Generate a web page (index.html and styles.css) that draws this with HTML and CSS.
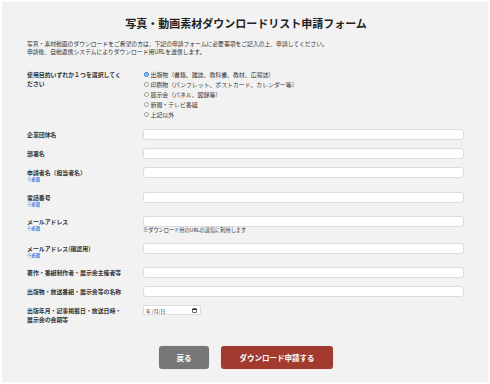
FILE: index.html
```html
<!DOCTYPE html>
<html lang="ja">
<head>
    <meta charset="UTF-8">
    <meta name="viewport" content="width=device-width, initial-scale=1.0">
    <title>写真・動画素材ダウンロードリスト申請フォーム</title>
    <link rel="stylesheet" href="styles.css">
</head>
<body>
    <div class="page">
        <h1 class="title">写真・動画素材ダウンロードリスト申請フォーム</h1>
        <p class="intro">
            写真・素材動画のダウンロードをご希望の方は、下記の申請フォームに必要事項をご記入の上、申請してください。<br>
            申請後、自動返信システムによりダウンロード用URLを送信します。
        </p>

        <form class="form" onsubmit="return false;">
            <div class="row row-radio">
                <div class="label">使用目的いずれか１つを選択してください</div>
                <div class="radios">
                    <label class="radio"><input type="radio" name="purpose" checked>出版物（書籍、雑誌、教科書、教材、広報誌）</label>
                    <label class="radio"><input type="radio" name="purpose">印刷物（パンフレット、ポストカード、カレンダー等）</label>
                    <label class="radio"><input type="radio" name="purpose">展示会（パネル、図録等）</label>
                    <label class="radio"><input type="radio" name="purpose">新聞・テレビ番組</label>
                    <label class="radio"><input type="radio" name="purpose">上記以外</label>
                </div>
            </div>

            <div class="row">
                <div class="label">企業団体名</div>
                <div class="field"><input type="text" class="text-input"></div>
            </div>

            <div class="row">
                <div class="label">部署名</div>
                <div class="field"><input type="text" class="text-input"></div>
            </div>

            <div class="row">
                <div class="label required">申請者名（担当者名）<span class="must">※必須</span></div>
                <div class="field"><input type="text" class="text-input"></div>
            </div>

            <div class="row">
                <div class="label required">電話番号<span class="must">※必須</span></div>
                <div class="field"><input type="tel" class="text-input"></div>
            </div>

            <div class="row row-mail">
                <div class="label required">メールアドレス<span class="must">※必須</span></div>
                <div class="field">
                    <input type="email" class="text-input">
                    <div class="note">※ダウンロード用のURLの送信に利用します</div>
                </div>
            </div>

            <div class="row">
                <div class="label required">メールアドレス(確認用)<span class="must">※必須</span></div>
                <div class="field"><input type="email" class="text-input"></div>
            </div>

            <div class="row">
                <div class="label">著作・番組制作者・展示会主催者等</div>
                <div class="field"><input type="text" class="text-input"></div>
            </div>

            <div class="row">
                <div class="label">出版物・放送番組・展示会等の名称</div>
                <div class="field"><input type="text" class="text-input"></div>
            </div>

            <div class="row">
                <div class="label">出版年月・記事掲載日・放送日時・展示会の会期等</div>
                <div class="field">
                    <div class="date-field">
                        <span>年 /月/日</span>
                        <svg class="cal-icon" viewBox="0 0 10 10" width="5" height="5">
                            <rect x="1" y="1.5" width="8" height="7.5" rx="1" fill="none" stroke="#222" stroke-width="1.4"/>
                            <rect x="1" y="1.5" width="8" height="2.5" fill="#222"/>
                        </svg>
                    </div>
                </div>
            </div>

            <div class="buttons">
                <button type="button" class="btn btn-back">戻る</button>
                <button type="submit" class="btn btn-submit">ダウンロード申請する</button>
            </div>
        </form>
    </div>
</body>
</html>
```

FILE: styles.css
```css
* {
    box-sizing: border-box;
    font-family: 'Noto Sans CJK JP', 'Noto Sans', sans-serif;
}
body {
    margin: 0;
    background-color: #ffffff;
    color: #333;
}
.page {
    margin: 2px;
    height: 380px;
    background-color: #f2f2f2;
    padding: 15px 23px 0 25px;
}
.title {
    margin: 0;
    font-size: 11px;
    line-height: 12px;
    font-weight: 700;
    text-align: center;
    color: #222;
}
.intro {
    margin: 11px 0 0;
    font-size: 5.8px;
    line-height: 8.2px;
    color: #333;
}
.form {
    margin-top: 12.6px;
    display: flex;
    flex-direction: column;
    gap: 8px;
}
.row {
    display: grid;
    grid-template-columns: 116px 1fr;
    align-items: start;
}
.label {
    padding: 1px 18px 0 0;
    font-size: 5.9px;
    line-height: 9px;
    font-weight: 700;
    color: #333;
}
.label.required {
    padding-bottom: 2.4px;
}
.must {
    display: block;
    font-size: 4.3px;
    line-height: 4px;
    color: #1e6fd9;
}
.row-radio {
    padding-bottom: 2.3px;
}
.radios {
    display: flex;
    flex-direction: column;
}
.radio {
    display: flex;
    align-items: center;
    gap: 2px;
    height: 10px;
    font-size: 5.9px;
    color: #333;
}
.radio input {
    appearance: none;
    -webkit-appearance: none;
    margin: 0 0 0 0.5px;
    width: 5px;
    height: 5px;
    border-radius: 50%;
    border: 0.6px solid #999;
    background-color: #fff;
}
.radio input:checked {
    border-color: #2a7be4;
    background-color: #2a7be4;
    box-shadow: inset 0 0 0 0.8px #fff;
}
.text-input {
    display: block;
    width: 321px;
    height: 11px;
    margin: 0;
    padding: 0 3px;
    border: 1px solid #dcdcdc;
    border-radius: 3px;
    background-color: #fff;
    outline: none;
}
.note {
    margin-top: -0.5px;
    padding-bottom: 3.1px;
    font-size: 5.2px;
    line-height: 5px;
    color: #333;
}
.date-field {
    display: flex;
    align-items: center;
    justify-content: space-between;
    width: 58px;
    height: 10px;
    padding: 0 3px 0 2px;
    border: 1px solid #dcdcdc;
    border-radius: 2px;
    background-color: #fff;
    font-size: 4.8px;
    color: #222;
}
.cal-icon {
    display: block;
}
.buttons {
    display: flex;
    justify-content: center;
    gap: 12px;
    margin-top: 13.7px;
}
.btn {
    height: 23.6px;
    border: none;
    border-radius: 3px;
    color: #fff;
    font-size: 7.5px;
    font-weight: 700;
    cursor: pointer;
    box-shadow: 0 0 0 0.6px #e4e4e4;
}
.btn-back {
    width: 50px;
    background-color: #777777;
}
.btn-submit {
    width: 112px;
    background-color: #a23a2f;
}
```
